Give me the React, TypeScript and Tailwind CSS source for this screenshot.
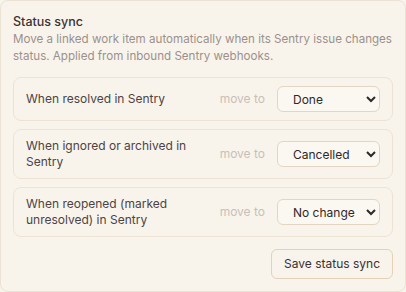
import React from "react";

const rows = [
  { label: "When resolved in Sentry", value: "Done" },
  { label: "When ignored or archived in Sentry", value: "Cancelled" },
  { label: "When reopened (marked unresolved) in Sentry", value: "No change" },
];

const options = ["No change", "Backlog", "Todo", "In Progress", "Done", "Cancelled"];

export default function App() {
  return (
    <div className="w-[406px] h-[292px] bg-[#f8f4ec] font-['Inter',sans-serif]">
      <div className="h-full rounded-lg border border-[#ebe2d4] bg-[#f8f4ec] p-3 flex flex-col">
        <h2 className="text-[12.5px] leading-[18px] font-medium text-[#3b3232]">Status sync</h2>
        <p className="mt-0 text-[11.6px] leading-[17px] text-[#9c908b]">
          Move a linked work item automatically when its Sentry issue changes status. Applied from inbound Sentry webhooks.
        </p>
        <div className="mt-3 flex flex-col gap-2">
          {rows.map((r) => (
            <div
              key={r.label}
              className="flex items-center gap-3 rounded-lg border border-[#ece3d5] bg-[#f8f4ec] px-3 py-2 min-h-[44px]"
            >
              <div className="flex-1 text-[12px] leading-[16px] text-[#4d4343] pr-2">{r.label}</div>
              <span className="text-[12px] text-[#c9bfb8]">move to</span>
              <select
                defaultValue={r.value}
                className="w-[103px] h-[26px] rounded-md border border-[#e2d5c2] bg-[#fbf8f2] pl-[11px] pr-1 text-[12px] text-[#2e2828] outline-none"
              >
                {options.map((o) => (
                  <option key={o} value={o}>
                    {o}
                  </option>
                ))}
              </select>
            </div>
          ))}
        </div>
        <div className="mt-3 flex justify-end">
          <button className="h-[30px] rounded-md border border-[#e2d2b9] bg-[#f8f4ec] px-3 text-[12px] text-[#3b3232]">
            Save status sync
          </button>
        </div>
      </div>
    </div>
  );
}
